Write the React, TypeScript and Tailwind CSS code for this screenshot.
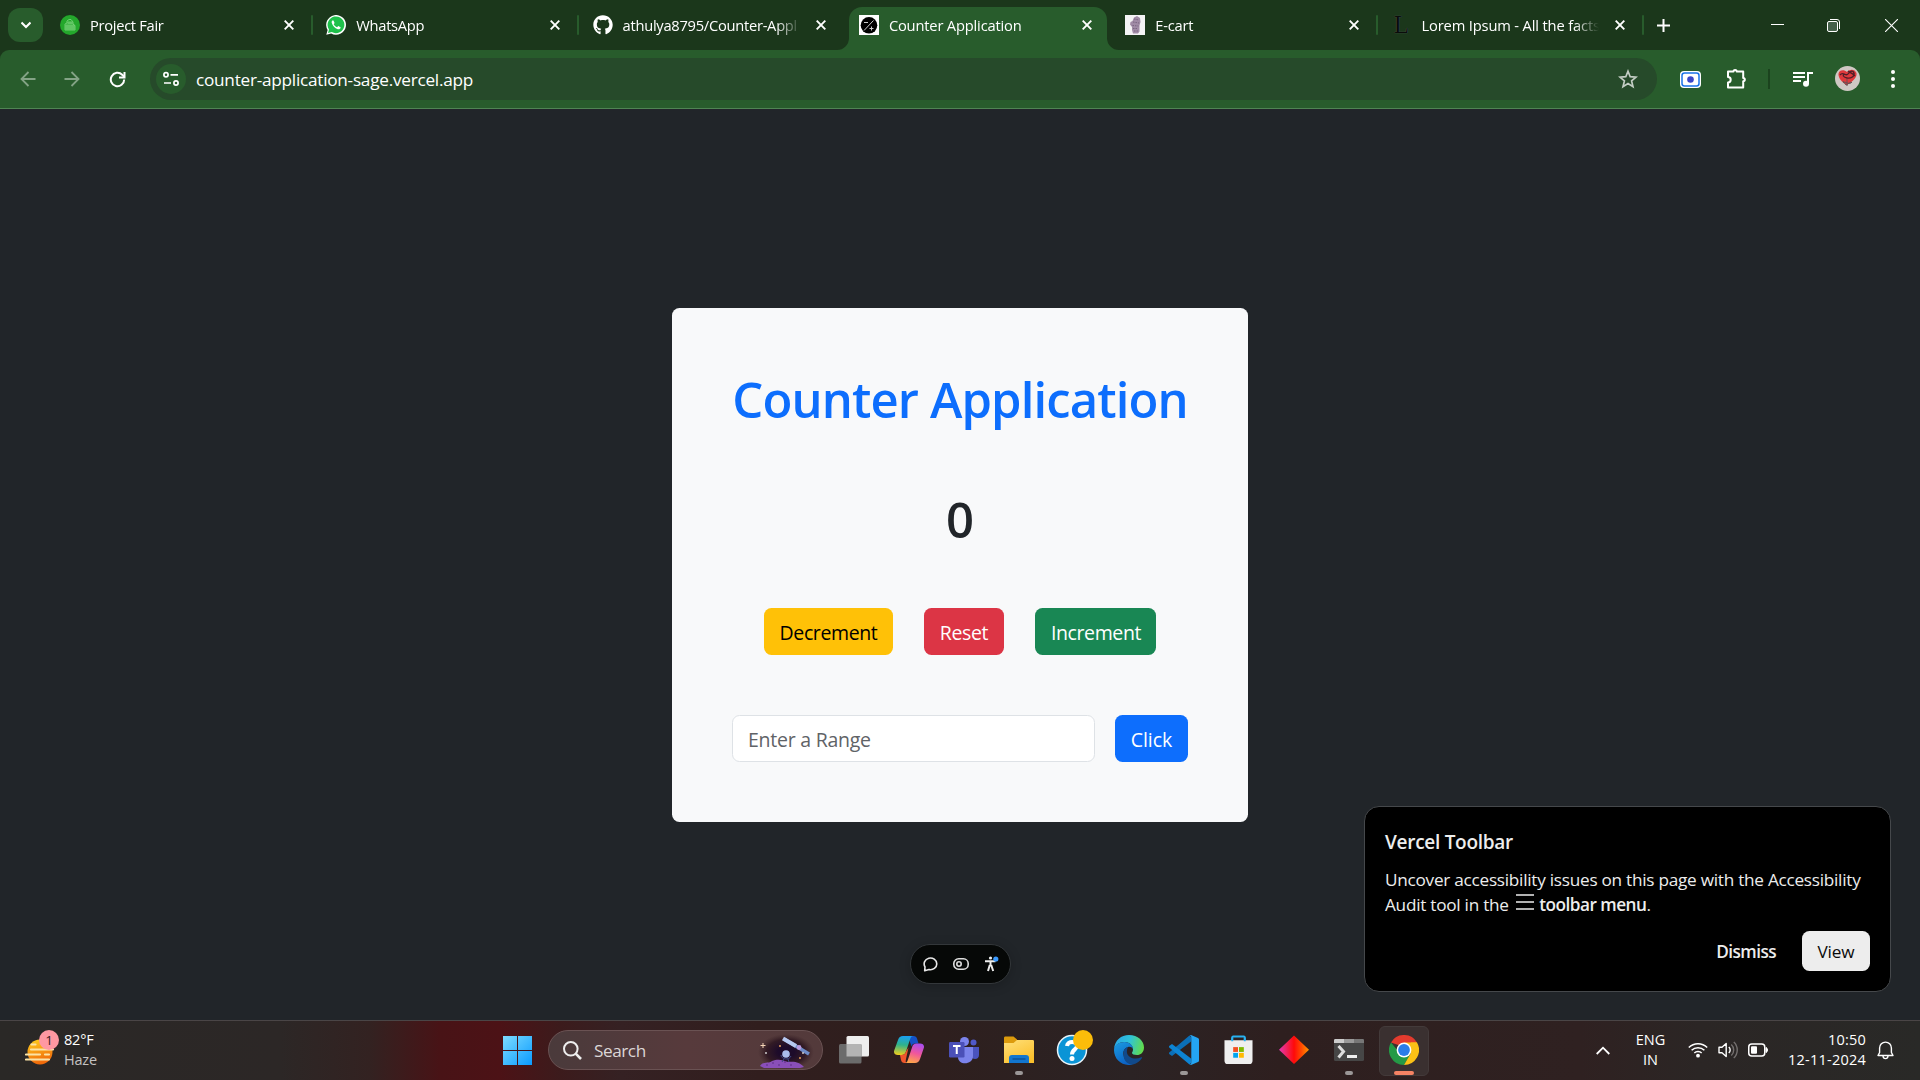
import type { ReactNode } from "react";
import { FaGithub } from "react-icons/fa";

function CloseGlyph() {
  return (
    <svg className="size-[10px] shrink-0" viewBox="0 0 10 10" stroke="#fff" strokeWidth="1.900" fill="none">
      <path d="M0.7 0.7 9.3 9.3M9.3 0.7 0.7 9.3" />
    </svg>
  );
}

type TabProps = {
  icon: ReactNode;
  title: string;
  active?: boolean;
  separator?: boolean;
  spacing?: string;
};

function Tab({ icon, title, active, separator, spacing = "tracking-[-0.3px]" }: TabProps) {
  return (
    <div className="relative flex h-[50px] w-[266.3px] shrink-0 items-center pl-[10px]">
      {active && (
        <>
          <div className="absolute top-[7px] left-0 h-[43px] w-[258px] rounded-t-[13px] bg-[#285c2c]" />
          <svg className="absolute bottom-0 -left-[12px] size-[12px]" viewBox="0 0 12 12">
            <path d="M12 0v12H0A12 12 0 0 0 12 0z" fill="#285c2c" />
          </svg>
          <svg className="absolute bottom-0 left-[258px] size-[12px]" viewBox="0 0 12 12">
            <path d="M0 0v12h12A12 12 0 0 1 0 0z" fill="#285c2c" />
          </svg>
        </>
      )}
      <div className="relative flex size-5 shrink-0 items-center justify-center">{icon}</div>
      <div
        className={`relative ml-[10px] w-[178px] overflow-hidden text-[14.7px] leading-[24px] whitespace-nowrap text-white [mask-image:linear-gradient(to_right,#000_86%,transparent)] ${spacing}`}
      >
        {title}
      </div>
      <div className="relative ml-[15.5px] flex">
        <CloseGlyph />
      </div>
      {separator && <div className="ml-[17.500px] h-5 w-[2px] rounded bg-[#285c2c]" />}
    </div>
  );
}

function TabStrip() {
  return (
    <div className="flex h-[50px] items-center bg-[#1b371b]">
      <div className="ml-2 flex h-[34px] w-[35px] items-center justify-center rounded-[12px] bg-[#285c2c]">
        <svg className="size-[10px]" viewBox="0 0 10 10" fill="none" stroke="#fff" strokeWidth="2.1">
          <path d="M0.5 2.5 5 7 9.5 2.5" />
        </svg>
      </div>
      <div className="ml-[7px] flex">
        <Tab
          separator
          title="Project Fair"
          icon={
            <svg className="size-5" viewBox="0 0 20 20">
              <circle cx="10" cy="10" r="10" fill="#24a82c" />
              <path
                d="M5 15V9l2-1V6l2-1.500h2L13 7v2l2 1.500V15zM7 15V9m2 6V6m2 9V6m2 9V9M5 11h10M5 13h10M7 8h6"
                fill="none"
                stroke="#8fdc8f"
                strokeWidth="0.7"
              />
            </svg>
          }
        />
        <Tab
          separator
          title="WhatsApp"
          icon={
            <svg className="size-5" viewBox="0 0 20 20">
              <path d="M0.300 19.700 1.600 15A9.900 9.900 0 1 1 5.200 18.500z" fill="#fff" />
              <path d="M2 18 3 14.500A8.400 8.400 0 1 1 5.800 17.100z" fill="#1fc14b" />
              <path
                d="M6.900 5.200c-1 .5-1.500 1.500-1.100 2.800.8 2.800 3 5.200 6 6.200 1.300.4 2.500-.2 2.800-1.400.1-.5 0-.6-.4-.8l-1.600-.8c-.4-.2-.6 0-.8.2l-.7.8c-1.500-.6-2.700-1.700-3.400-3l.6-.8c.2-.3.2-.5.1-.8l-.7-1.700c-.2-.4-.4-.6-.8-.7z"
                fill="#fff"
              />
            </svg>
          }
        />
        <Tab title="athulya8795/Counter-Appl" spacing="tracking-[-0.27px]" icon={<FaGithub className="size-5 text-white" />} />
        <Tab
          active
          title="Counter Application"
          spacing="tracking-[-0.18px]"
          icon={
            <svg className="size-5" viewBox="0 0 20 20">
              <path d="M0 0h20v20H0z" fill="#fff" />
              <circle cx="10" cy="10.300" r="8.300" fill="#000" />
              <path d="M5 15.500 14.500 5.500M5 7.500h4M10.500 13.500h4M12.500 11.500v4" stroke="#ccc" strokeWidth="1" />
            </svg>
          }
        />
        <Tab
          separator
          title="E-cart"
          spacing="tracking-[-0.2px]"
          icon={
            <svg className="size-5" viewBox="0 0 20 20">
              <path d="M0 0h20v20H0z" fill="#f4f3f5" />
              <path
                d="M9 2.500 12 1l3 2 .5 4-1 3.500v6l-1.500 2H8l-1-3.500v-3L5 9.500 5.500 7l2-1z"
                fill="#a08ba6"
              />
              <path d="m9 4 5 1M8 7l6 1M7.500 10.500l6 .5M8 13.500h5M9 16h4" stroke="#6f5a77" strokeWidth="0.800" strokeDasharray="1.500 1" />
            </svg>
          }
        />
        <Tab
          separator
          title="Lorem Ipsum - All the facts"
          spacing="tracking-[-0.15px]"
          icon={
            <span className="text-[25px] leading-5 text-[#0a0c0a] [font-family:'Liberation_Serif',serif] [text-shadow:0_0_1px_#667]">
              L
            </span>
          }
        />
      </div>
      <svg className="ml-[9px] size-[13px]" viewBox="0 0 13 13" stroke="#fff" strokeWidth="2">
        <path d="M6.500 0v13M0 6.500h13" />
      </svg>
      <div className="mr-[22px] ml-auto flex items-center">
        <div className="mt-[-1px] h-px w-[13px] bg-white" />
        <svg className="ml-[43px] size-[13px]" viewBox="0 0 13 13" fill="none" stroke="#fff">
          <rect x="0.500" y="2.500" width="10" height="10" rx="1.500" fill="#45604a" />
          <path d="M3 0.500h7a2.500 2.500 0 0 1 2.500 2.500v7" />
        </svg>
        <svg className="ml-[45px] size-[13px]" viewBox="0 0 13 13" stroke="#fff" strokeWidth="1.100">
          <path d="M0 0 13 13M13 0 0 13" />
        </svg>
      </div>
    </div>
  );
}

function AddressBar() {
  return (
    <div className="bg-[#1b371b]">
      <div className="flex h-[59px] items-center rounded-t-[9px] border-b border-[#4f8453] bg-[#285c2c]">
        <svg className="ml-5 size-[16px]" viewBox="0 0 16 16" fill="none" stroke="#84a386" strokeWidth="1.800">
          <path d="M15.500 8H1.500M8.500 1 1.500 8l7 7" />
        </svg>
        <svg className="ml-[28px] size-[16px]" viewBox="0 0 16 16" fill="none" stroke="#84a386" strokeWidth="1.800">
          <path d="M0.500 8h14M7.500 1l7 7-7 7" />
        </svg>
        <svg className="ml-[29px] size-[17px]" viewBox="0 0 17 17" fill="none" stroke="#fff" strokeWidth="2">
          <path d="M15.200 8.500a6.700 6.700 0 1 1-2-4.800L15.500 6" />
          <path d="M15.500 1v5.500H10" />
        </svg>
        <div className="ml-[24px] flex h-[42px] w-[1507px] items-center rounded-full bg-[#264a2a] pl-[6px]">
          <div className="flex size-[30px] items-center justify-center rounded-full bg-[#285c2c]">
            <svg className="size-[16px]" viewBox="0 0 16 16" fill="none" stroke="#fff" strokeWidth="1.700">
              <circle cx="3" cy="3.800" r="2.100" />
              <path d="M7.500 3.800H15M1 12h7" />
              <circle cx="13" cy="12" r="2.100" />
            </svg>
          </div>
          <div className="ml-[10px] pt-[2px] text-[17.2px] leading-6 tracking-[-0.25px] text-white">
            counter-application-sage.vercel.app
          </div>
          <svg className="mr-[19.500px] ml-auto size-[20px]" viewBox="0 0 20 20" fill="none" stroke="#c3cdc4" strokeWidth="1.700">
            <path d="m10 2.200 2.200 5.500 5.900.4-4.500 3.800 1.400 5.800-5-3.100-5 3.100 1.400-5.800L1.900 8.100l5.900-.4z" />
          </svg>
        </div>
        <svg className="ml-[23px] h-[17px] w-[21px]" viewBox="0 0 21 17">
          <rect width="21" height="17" rx="4" fill="#fff" />
          <rect x="2" y="2" width="17" height="13" rx="2.500" fill="#fff" stroke="#1a73e8" strokeWidth="1.500" />
          <circle cx="10.500" cy="8.500" r="3.300" fill="#3b46c8" />
        </svg>
        <svg className="mt-[-3px] ml-[24px] size-[22px]" viewBox="0 0 22 22" fill="none" stroke="#fff" strokeWidth="2">
          <path d="M3 4.500h5.500a1.600 1.600 0 0 1 3.200 0h6.500v6.500a1.600 1.600 0 0 1 0 3.200v6.300H3v-5a2.700 2.700 0 0 0 0-5.400z" strokeLinejoin="round" />
        </svg>
        <div className="ml-[21px] h-5 w-[2px] bg-[#1b431e]" />
        <svg className="ml-[23px] h-[16px] w-[20px]" viewBox="0 0 20 16" fill="none" stroke="#fff" strokeWidth="2">
          <path d="M0 2h12M0 6h12M0 10h8M15 13V2h5" />
          <circle cx="13" cy="12.700" r="3" fill="#fff" stroke="none" />
        </svg>
        <svg className="mt-[-1px] ml-[22px] size-[25px]" viewBox="0 0 25 25">
          <circle cx="12.500" cy="12.500" r="12.500" fill="#cfc8c4" />
          <path d="M12 19C6 16 3 11 3.500 7.500 4 4 9 3 12 6c3-3.500 8-3 9.500 1 .8 4-3 8-9.500 12z" fill="#e0393c" />
          <path d="M5 9c3-4 6 2 8-1s5-4 6-1-3 6-7 5-5-3-2-4M13 5c2 2 5 2 7 5" fill="none" stroke="#512028" strokeWidth="1.300" />
          <path d="M8 17c2-3 6 3 9-1M12 13v7M8 15l3 4 5-3" fill="none" stroke="#6a5054" />
        </svg>
        <svg className="ml-[30.500px] h-[18px] w-[4px]" viewBox="0 0 4 18" fill="#fff">
          <circle cx="2" cy="2" r="2" />
          <circle cx="2" cy="9" r="2" />
          <circle cx="2" cy="16" r="2" />
        </svg>
      </div>
    </div>
  );
}

function CounterCard() {
  return (
    <div className="flex h-[514px] w-[576px] flex-col rounded-[7.5px] bg-[#f8f9fa] p-[60px]">
      <h1 className="mt-px text-center text-[49px] leading-[60px] font-semibold tracking-[-0.88px] whitespace-nowrap text-[#0d6efd]">
        Counter Application
      </h1>
      <div className="mt-[60px] text-center text-[49px] leading-[60px] font-semibold text-[#212529]">0</div>
      <div className="mt-[59px] flex justify-center gap-[31px] text-[19.500px] leading-[30px] tracking-[-0.380px]">
        <button className="h-[47px] w-[129px] rounded-[7.5px] bg-[#ffc107] pt-[3px] text-black">Decrement</button>
        <button className="h-[47px] w-[80px] rounded-[7.5px] bg-[#dc3545] pt-[3px] text-white">Reset</button>
        <button className="h-[47px] w-[121px] rounded-[7.5px] bg-[#198754] pt-[3px] pl-px text-white">Increment</button>
      </div>
      <div className="mt-[60px] flex text-[19.500px] leading-[30px]">
        <input
          className="h-[47px] w-[363px] rounded-[7.5px] border border-[#dee2e6] bg-white px-[15px] pt-[3px] tracking-[-0.25px] placeholder:text-[#5f6367]"
          placeholder="Enter a Range"
        />
        <button className="ml-5 h-[47px] w-[73px] rounded-[7.5px] bg-[#0d6efd] pt-[3px] tracking-[0px] text-white">Click</button>
      </div>
    </div>
  );
}

function ToolbarToast() {
  return (
    <div className="absolute top-[697px] left-[1364px] h-[186px] w-[527px] rounded-[15px] border border-[#45484b] bg-black px-[20px] text-[#ededed]">
      <div className="mt-[21px] text-[19px] leading-[28px] font-semibold tracking-[-0.28px]">Vercel Toolbar</div>
      <div className="mt-[11px] text-[17.200px] leading-[25px] tracking-[-0.260px] whitespace-nowrap">
        Uncover accessibility issues on this page with the Accessibility
        <br />
        Audit tool in the{" "}
        <svg className="mr-px mb-[8px] ml-[3px] inline h-[16px] w-[18px]" viewBox="0 0 18 16" stroke="#ededed" strokeWidth="1.700">
          <path d="M0 1h18M0 8h18M0 15h18" />
        </svg>{" "}
        <b className="font-semibold tracking-[-0.500px]">toolbar menu</b>.
      </div>
      <div className="mt-[13px] flex items-center justify-end text-[17.200px] font-semibold tracking-[-0.560px]">
        <span className="mt-px mr-[26px]">Dismiss</span>
        <span className="flex h-10 w-[68px] items-center justify-center rounded-[7.5px] bg-[#ededed] pt-px font-medium tracking-[-0.100px] text-[#0a0a0a]">
          View
        </span>
      </div>
    </div>
  );
}

function ToolbarPill() {
  return (
    <div className="absolute top-[835px] left-[910px] flex h-10 w-[101px] items-center justify-between rounded-full border border-[#33373a] bg-[#060807] pr-[11px] pl-[12px] shadow-[0_2px_12px_rgba(0,0,0,0.2)]">
      <svg className="size-[16px]" viewBox="0 0 16 16" fill="none" stroke="#e8e8e8" strokeWidth="1.600">
        <path d="M1.700 14.800 2 10.800A6.300 5.900 0 1 1 6 13.600z" strokeLinejoin="round" />
      </svg>
      <svg className="h-[12px] w-[16px]" viewBox="0 0 16 12" fill="none" stroke="#dedede" strokeWidth="1.600">
        <rect x="0.800" y="0.800" width="14.400" height="10.400" rx="4.800" />
        <circle cx="6" cy="6" r="2.200" />
      </svg>
      <svg className="size-[16px]" viewBox="0 0 16 16">
        <circle cx="7.500" cy="2" r="1.600" fill="#eee" />
        <path d="M2 5.300h10.500M7.500 5v5M6.800 9 5 15M8.200 9l2 6" stroke="#eee" strokeWidth="2" fill="none" />
        <circle cx="12.800" cy="3" r="2.600" fill="#3b9bff" />
      </svg>
    </div>
  );
}

type AppCellProps = { children: ReactNode; running?: boolean; active?: boolean };

function AppCell({ children, running, active }: AppCellProps) {
  return (
    <div className="relative flex h-[59px] w-[55px] shrink-0 items-center justify-center">
      {active && <div className="absolute top-[5px] left-[3px] size-[50px] rounded-[6px] border border-[#433a3a] bg-[#3a3030]" />}
      <div className="relative flex size-[30px] items-center justify-center">{children}</div>
      {running && <div className="absolute bottom-[5px] left-[23.500px] h-[4px] w-[8px] rounded-full bg-[#9b9797]" />}
      {active && <div className="absolute bottom-[5px] left-[18px] h-[4px] w-[20px] rounded-full bg-[#f58364]" />}
    </div>
  );
}

function SatelliteArt() {
  return (
    <svg className="mr-[8px] ml-auto h-[38px] w-[58px]" viewBox="0 0 58 38">
      <defs>
        <radialGradient id="night">
          <stop offset="0.300" stopColor="#1d0b2a" />
          <stop offset="0.700" stopColor="#2c1520" stopOpacity="0.850" />
          <stop offset="1" stopColor="#3a2226" stopOpacity="0" />
        </radialGradient>
      </defs>
      <ellipse cx="30" cy="21" rx="28" ry="18" fill="url(#night)" />
      <path d="M4 35c3-5 9-2 12-5 6-2.500 11-1 16 1 6-1 12 0 16 5l-4 1H8z" fill="#8a4fb8" />
      <path d="M10 34h2m4-2h2m4 2h2m4-3h2m4 3h2" stroke="#5c2f86" />
      <path d="m28 8 25 15" stroke="#6f8cc8" strokeWidth="3.500" />
      <path d="m27 7.500 13 7.500" stroke="#b7c9f0" strokeWidth="4" />
      <circle cx="43" cy="16.500" r="2.400" fill="#b99be0" />
      <circle cx="30" cy="23" r="3.800" fill="#a9bdec" />
      <path d="M25 24c0 4 8 6 10 1M28 28l-2 3m6-3 1 3" stroke="#3e4a86" fill="none" />
      <path d="M7 12v5M4.500 14.500h5" stroke="#f6d7b8" />
      <circle cx="24" cy="15" r="1" fill="#e9a25c" />
      <circle cx="10" cy="22" r="0.900" fill="#ddd" />
      <circle cx="47" cy="22" r="0.900" fill="#ddd" />
      <circle cx="44" cy="27" r="1" fill="#e9a25c" />
    </svg>
  );
}

function TaskbarApps() {
  return (
    <>
      <AppCell>
        <svg className="size-[29px]" viewBox="0 0 29 29">
          <defs>
            <linearGradient id="win" x1="0" y1="0" x2="29" y2="29" gradientUnits="userSpaceOnUse">
              <stop stopColor="#7ddcff" />
              <stop offset="1" stopColor="#0a9bff" />
            </linearGradient>
          </defs>
          <path d="M0 0h14v14H0zM15 0h14v14H15zM0 15h14v14H0zM15 15h14v14H15z" fill="url(#win)" />
        </svg>
      </AppCell>
      <div className="ml-[3px] flex h-10 w-[275px] shrink-0 items-center rounded-full border border-[#6a5253] bg-[linear-gradient(90deg,#4a3a3b,#573a3c_50%,#533a3b)] pl-[14px]">
        <svg className="size-[19px]" viewBox="0 0 19 19" fill="none" stroke="#eee" strokeWidth="2">
          <circle cx="7.800" cy="7.800" r="6.800" />
          <path d="m12.700 12.700 5.300 5.300" strokeWidth="2.600" />
        </svg>
        <span className="ml-[12px] pt-[2px] text-[17.200px] tracking-[-0.450px] text-[#dcd6d6]">Search</span>
        <SatelliteArt />
      </div>
      <div className="w-[3px] shrink-0" />
      <AppCell>
        <svg className="size-[30px]" viewBox="0 0 30 30">
          <rect x="7.500" y="1" width="22.500" height="20.500" rx="1.500" fill="#eee" />
          <rect x="0" y="9" width="22.500" height="19.500" rx="1.500" fill="#6b6b6b" />
          <path d="M7.500 9h15v12.500h-15z" fill="#b4b4b4" />
        </svg>
      </AppCell>
      <AppCell>
        <svg className="size-[30px]" viewBox="0 0 30 30">
          <defs>
            <linearGradient id="cpa" x1="0.300" y1="0" x2="0.200" y2="1">
              <stop stopColor="#1ba0ee" />
              <stop offset="0.450" stopColor="#2fb38c" />
              <stop offset="1" stopColor="#f2cf1c" />
            </linearGradient>
            <linearGradient id="cpb" x1="0.700" y1="0" x2="0.400" y2="1">
              <stop stopColor="#a94df0" />
              <stop offset="0.500" stopColor="#f0569c" />
              <stop offset="1" stopColor="#ffa54a" />
            </linearGradient>
          </defs>
          <path d="M14 1h5.500c2 0 3 1 3.500 2.500L24.500 8.500H21c-2 0-3 1-3.500 3z" fill="#1452c8" />
          <path d="M9 1h10.500c-2 0-2.800 1-3.500 3.500l-4 12c-.8 2.500-2 3.500-4.500 3.500H4c-3 0-4.600-2-3.800-4.500L4 5C4.800 2.300 6.500 1 9 1z" fill="url(#cpa)" />
          <path d="M6 20h1.500c2.500 0 3.700-1 4.500-3.500l2.500-4-2.500 11.500c-.5 3-.5 4 1.500 4h-3C8.500 28 7.500 27 7 25z" fill="#f0562c" />
          <path d="M21 28H10.500c2 0 2.800-1 3.500-3.500l4-12C18.800 9.500 20 8.500 22.500 8.500H26c3 0 4.600 2 3.800 4.500L26 24c-.8 2.700-2.500 4-5 4z" fill="url(#cpb)" />
        </svg>
      </AppCell>
      <AppCell>
        <svg className="size-[30px]" viewBox="0 0 30 30">
          <circle cx="24.500" cy="7.500" r="3" fill="#5059c9" />
          <path d="M20 12h10v8c0 4-4 5-7 3z" fill="#4a53bf" />
          <circle cx="15.500" cy="6.500" r="4.500" fill="#7b83eb" />
          <path d="M9 12h15v9c0 9-15 10-15 1z" fill="#7b83eb" />
          <rect x="0" y="7" width="15.500" height="15.500" rx="1.200" fill="#4b50b8" />
          <path d="M4 11h7.500M7.750 11v8" stroke="#fff" strokeWidth="2" />
        </svg>
      </AppCell>
      <AppCell running>
        <svg className="size-[30px]" viewBox="0 0 30 30">
          <defs>
            <linearGradient id="fold" x1="0" y1="0" x2="0.600" y2="1">
              <stop stopColor="#ffe07a" />
              <stop offset="1" stopColor="#fbc02d" />
            </linearGradient>
          </defs>
          <path d="M0 9V3c0-1 .5-1.500 1.500-1.500h8L13 4.500V9z" fill="#dd9b0c" />
          <path d="M0 8h9.500L13 5h15.500C29.500 5 30 5.500 30 6.500V28H0z" fill="url(#fold)" />
          <path d="M5 28v-5c0-2 1-3 3-3h14c2 0 3 1 3 3v5z" fill="#1276cf" />
          <path d="M8.500 24h13" stroke="#0a4a8c" strokeWidth="1.200" />
        </svg>
      </AppCell>
      <AppCell>
        <svg className="mr-px size-[40px] shrink-0" viewBox="0 0 40 40">
          <circle cx="19" cy="20" r="14.500" fill="#0a94d6" stroke="#e9f3f8" strokeWidth="1.500" />
          <path d="M14 16c.5-5.500 10-5 10 0 0 3.500-5 3.500-5 8.500" stroke="#fff" strokeWidth="4" fill="none" />
          <circle cx="19" cy="28.500" r="2.500" fill="#fff" />
          <circle cx="30" cy="10" r="10" fill="#fbbc0a" />
        </svg>
      </AppCell>
      <AppCell>
        <svg className="size-[30px]" viewBox="0 0 30 30">
          <defs>
            <linearGradient id="ea" x1="0" y1="0.300" x2="1" y2="0.500">
              <stop stopColor="#2aa6e8" />
              <stop offset="0.500" stopColor="#2fc3d8" />
              <stop offset="1" stopColor="#62dc4b" />
            </linearGradient>
            <linearGradient id="eb" x1="0" y1="0" x2="0.500" y2="1">
              <stop stopColor="#1b9de2" />
              <stop offset="1" stopColor="#0c62c4" />
            </linearGradient>
          </defs>
          <path d="M0 14C1 5 7 0 15 0c9 0 15 6 15 12.500 0 5-3.500 7.500-7 7.500-3 0-5-1-5-2 0-1 1-1.500 1-3.500C19 10 15 7 10.500 7 5 7 1.500 10 0 14z" fill="url(#ea)" />
          <path d="M0 15c0-5 5-8 10.500-8 4.500 0 8.500 3 8.500 7-1-2-3-2.500-5-2-4 1-5 5-4.500 8 .8 5 4.500 8.500 9.500 9.500C9 32 0 25 0 15z" fill="url(#eb)" />
          <path d="M10 17c-2 7 3 13 9 12.500 4-.8 7-3.500 9-6.500.4-.7-.2-1-.8-.7-6 2.700-13 .7-14.200-4.300-.3-2 0-4 1-6-2 .5-3.500 2-5 5z" fill="#114a8b" />
        </svg>
      </AppCell>
      <AppCell running>
        <svg className="size-[30px]" viewBox="0 0 30 30">
          <path d="m22 6.500-19 14.500-2.500-1.800c-.7-.6-.7-1.400 0-2L20.500.5l2 2z" fill="#0b6fb8" />
          <path d="m22 23.500-19-14.500-2.500 1.800c-.7.600-.7 1.400 0 2L20.500 29.500l2-2z" fill="#0d84d4" />
          <path d="m20.500.2 1.500-.2L29 3c.7.400 1 .8 1 1.500v21c0 .7-.3 1.200-1 1.500l-7 3-1.800-.8C21.500 29.500 22.300 29 22.300 27.500V2.500c0-1.500-.8-2-1.800-2.300z" fill="#24a5f3" />
        </svg>
      </AppCell>
      <AppCell>
        <svg className="mr-px size-[30px]" viewBox="0 0 30 30">
          <path d="M8.500 7V2c0-.7.3-1 1-1h11c.7 0 1 .3 1 1v5" fill="none" stroke="#28b1f0" strokeWidth="2" />
          <path d="M0.500 5h29v21c0 2-1 3.500-3.500 3.500H4C1.500 29.500.5 28 .5 26z" fill="#efefef" />
          <path d="M8.500 6V2M21.500 6V2" stroke="#28b1f0" strokeWidth="2" />
          <path d="M9.500 12h5v5h-5z" fill="#f25022" />
          <path d="M15.500 12h5v5h-5z" fill="#7fba00" />
          <path d="M9.500 18h5v5h-5z" fill="#00a4ef" />
          <path d="M15.500 18h5v5h-5z" fill="#ffb900" />
        </svg>
      </AppCell>
      <AppCell>
        <svg className="size-[30px]" viewBox="0 0 30 30">
          <defs>
            <linearGradient id="dia">
              <stop stopColor="#e13bb4" />
              <stop offset="0.500" stopColor="#ff0a0a" />
              <stop offset="0.750" stopColor="#ff4a00" />
              <stop offset="1" stopColor="#ff9500" />
            </linearGradient>
          </defs>
          <path d="M15 .5 30 14.800 15 29 0 14.800z" fill="url(#dia)" />
        </svg>
      </AppCell>
      <AppCell running>
        <svg className="size-[30px]" viewBox="0 0 30 30">
          <rect y="4" width="30" height="22" rx="1.500" fill="#464646" />
          <path d="M0 8V5.500C0 4.500.5 4 1.500 4H10v4z" fill="#ccc" />
          <path d="M10 4h10v4H10z" fill="#999" />
          <path d="M20 4h8.500c1 0 1.500.5 1.500 1.500V8H20z" fill="#777" />
          <path d="m4.500 11 5 5.500-5 6" fill="none" stroke="#ddd" strokeWidth="3" />
          <path d="M13 21.500h10" stroke="#eee" strokeWidth="3" />
        </svg>
      </AppCell>
      <AppCell active>
        <svg className="size-[30px]" viewBox="0 0 30 30">
          <path d="M2 7.500A15 15 0 0 1 28 7.500L15 12z" fill="#e33b2e" />
          <path d="M2 7.500A15 15 0 0 0 15 30l6.500-11-10 0z" fill="#249a46" />
          <path d="M28 7.500A15 15 0 0 1 15 30l6.500-11.200L22 7.500z" fill="#fbc116" />
          <path d="M15 7.500h13l-6 9z" fill="#fbc116" />
          <circle cx="15" cy="15" r="7.400" fill="#fff" />
          <circle cx="15" cy="15" r="5.900" fill="#2a7de9" />
        </svg>
      </AppCell>
    </>
  );
}

function Taskbar() {
  return (
    <div className="flex h-[60px] items-center border-t border-[#4a4546] bg-[linear-gradient(90deg,#2a2826_0px,#2c2726_280px,#332221_370px,#481316_440px,#4c1216_500px,#3c1b1c_560px,#352123_620px,#311e1e_760px,#2e1f1e_940px,#2b2324_1130px,#2e1f1f_1280px,#2f2121_1580px,#2b2625_1700px,#292927_1920px)] pb-px">
      <div className="flex w-[490px] shrink-0 items-center pl-[25px]">
        <div className="relative -mt-[2px]">
          <svg className="h-[36px] w-[32px]" viewBox="0 0 32 36">
            <defs>
              <linearGradient id="sun" x1="0" y1="0" x2="0.300" y2="1">
                <stop stopColor="#ffd21f" />
                <stop offset="1" stopColor="#f06a0a" />
              </linearGradient>
            </defs>
            <circle cx="15" cy="21" r="12.500" fill="url(#sun)" />
            <path d="M6.500 13.500h4M6 18.500h22M1 23.500h14M20 23.500h4M1 28.500h23" stroke="#fbe3a6" strokeWidth="2.200" strokeLinecap="round" />
          </svg>
          <div className="absolute -top-[1px] left-[14px] flex size-5 items-center justify-center rounded-full bg-[#ff98a2] text-[13.500px] text-[#3a1a1c]">
            1
          </div>
        </div>
        <div className="ml-[7px] text-[14.500px] leading-5 tracking-[-0.200px]">
          <div className="text-white">82°F</div>
          <div className="text-[#c4c2c1]">Haze</div>
        </div>
      </div>
      <TaskbarApps />
      <div className="ml-auto flex items-center text-[14.500px] leading-5 text-white">
        <svg className="mr-[25px] h-[9px] w-[14px]" viewBox="0 0 14 9" fill="none" stroke="#fff" strokeWidth="1.800">
          <path d="m.7 8 6.300-6.300L13.300 8" />
        </svg>
        <div className="mr-[22px] w-[31px] text-center tracking-[0px]">
          <div>ENG</div>
          <div>IN</div>
        </div>
        <svg className="mr-[10px] h-[16px] w-[20px]" viewBox="0 0 20 16" fill="none" stroke="#fff" strokeWidth="1.500">
          <path d="M.8 5.500a13 13 0 0 1 18.400 0M3.600 8.300a9 9 0 0 1 12.800 0M6.300 11a5.200 5.200 0 0 1 7.400 0" />
          <circle cx="10" cy="13.700" r="1.900" fill="#fff" stroke="none" />
        </svg>
        <svg className="mr-[10px] h-[18px] w-[20px]" viewBox="0 0 20 18" fill="none" stroke="#fff" strokeWidth="1.400">
          <path d="M1 6.200h3L8.200 2.500v13L4 11.800H1z" strokeLinejoin="round" />
          <path d="M10.800 6a4 4 0 0 1 0 6" />
          <path d="M13.300 3.500a7.500 7.500 0 0 1 0 11M15.800 1a11 11 0 0 1 0 16" stroke="#736f6e" />
        </svg>
        <svg className="mr-[20px] h-[14px] w-[20px]" viewBox="0 0 20 14">
          <rect x="0.750" y="1" width="16" height="12" rx="3" fill="none" stroke="#fff" strokeWidth="1.500" />
          <rect x="3" y="3.200" width="6" height="7.600" rx="1" fill="#fff" />
          <path d="M18 4.500c2 .5 2 4.500 0 5z" fill="#fff" stroke="#fff" />
        </svg>
        <div className="text-right tracking-[0.230px]">
          <div>10:50</div>
          <div>12-11-2024</div>
        </div>
        <svg className="mr-[26px] ml-[11px] h-[19px] w-[17px]" viewBox="0 0 17 19" fill="none" stroke="#fff" strokeWidth="1.400">
          <path d="M1 14.500h15l-1.600-3V7a5.900 5.900 0 0 0-11.800 0v4.500z" strokeLinejoin="round" />
          <path d="M6 15c.3 3.500 4.700 3.500 5 0" />
        </svg>
      </div>
    </div>
  );
}

export default function App() {
  return (
    <div className="flex h-[1080px] w-[1920px] flex-col overflow-hidden bg-[#212529] font-['Open_Sans','Noto_Sans',sans-serif]">
      <TabStrip />
      <AddressBar />
      <main className="relative flex h-[911px] items-center justify-center">
        <CounterCard />
        <ToolbarToast />
        <ToolbarPill />
      </main>
      <Taskbar />
    </div>
  );
}
